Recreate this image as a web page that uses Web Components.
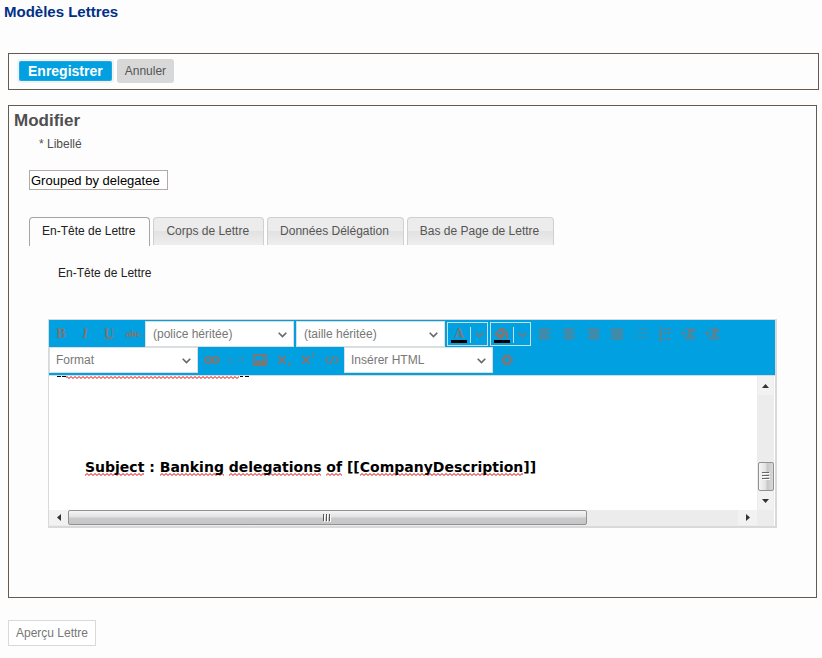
<!DOCTYPE html>
<html lang="fr">
<head>
<meta charset="utf-8">
<title>Modèles Lettres</title>
<style>
  body { margin: 0; background: #fdfdfd; color: #4f4f4f; font: 12px/16px "Liberation Sans", Arial, sans-serif; }
</style>
</head>
<body>
<letter-page></letter-page>
<script>
const define = (name, html) => {
  const template = document.createElement('template');
  template.innerHTML = html;
  customElements.define(name, class extends HTMLElement {
    constructor() {
      super();
      this.attachShadow({ mode: 'open' }).append(template.content.cloneNode(true));
    }
    connectedCallback() {
      const root = this.shadowRoot;
      const label = this.getAttribute('label');
      if (name === 'tool-button') {
        root.querySelector('button').setAttribute('aria-label', label);
      } else if (name === 'tool-select') {
        root.querySelector('option').textContent = label;
        root.querySelector('select').setAttribute('aria-label', this.getAttribute('hint'));
      } else if (name === 'color-button') {
        root.querySelector('.apply').setAttribute('aria-label', label);
        root.querySelector('.more').setAttribute('aria-label', label + ' : options');
      } else if (name === 'tab-item') {
        root.querySelector('button').setAttribute('aria-selected', this.hasAttribute('active'));
      }
    }
  });
};

define('panel-box', `
<style>
  :host { display: block; box-sizing: border-box; border: 1px solid #665a50; }
</style>
<slot></slot>`);

define('action-button', `
<style>
  :host { display: block; }
  button { display: block; box-sizing: border-box; height: 24px; padding: 0 8px; border: 0; border-radius: 3px;
    background: #d8d8d8; color: #555; font: 12px/24px "Liberation Sans", Arial, sans-serif; }
  :host([primary]) button { padding: 0 9px; border: 2px solid #eef3f6; border-radius: 4px; background: #00a0e1; color: #fff;
    box-shadow: inset 0 0 0 1px #24a6dd; font-size: 14px; font-weight: bold; line-height: 18px; }
  :host([outline]) button { height: 26px; padding: 0 7px; border: 1px solid #d9d9d9; border-radius: 0; background: #fff; color: #777; }
</style>
<button type="button"><slot></slot></button>`);

define('tab-item', `
<style>
  :host { display: block; }
  button { display: block; box-sizing: border-box; height: 28px; padding: 0 14px 1px 12px; border: 1px solid #d0d0d0; border-bottom: 0;
    border-radius: 4px 4px 0 0; background: linear-gradient(#ececec 0 50%, #e2e2e2 50%, #eee); color: #555;
    font: 12px/26px "Liberation Sans", Arial, sans-serif; white-space: nowrap; }
  :host([active]) button { height: 29px; padding-bottom: 2px; border-color: #a5a5a5; background: #fdfdfd; color: #212121; }
</style>
<button type="button" role="tab"><slot></slot></button>`);

define('tool-button', `
<style>
  :host { display: block; }
  button { display: flex; align-items: center; justify-content: center; width: 24px; height: 25px; padding: 0; border: 0;
    background: none; color: #7d7674; font: bold 14px/16px "Liberation Serif", "Times New Roman", serif; }
  ::slotted(svg) { display: block; width: 16px; height: 16px; fill: none; stroke: currentColor; }
</style>
<button type="button"><slot></slot></button>`);

define('tool-select', `
<style>
  :host { display: grid; width: 149px; height: 26px; }
  select, svg { grid-area: 1 / 1; }
  select { appearance: none; box-sizing: border-box; width: 100%; height: 26px; margin: 0; padding: 0 28px 0 7px; border: 1px solid #d9dee0;
    border-radius: 0; background: #fff; color: #777; font: 12px/24px "Liberation Sans", Arial, sans-serif; }
  :host([tight]) select { padding-left: 6px; }
  svg { justify-self: end; align-self: center; margin: 2px 7px 0 0; pointer-events: none; }
</style>
<select><option></option></select>
<svg width="9" height="6" viewBox="0 0 9 6" fill="none" stroke="#666" stroke-width="1.6"><path d="M.7.8 4.5 4.6 8.3.8"/></svg>`);

define('color-button', `
<style>
  :host { display: flex; box-sizing: border-box; width: 41px; height: 24px; border: 1px solid #c9dfe8; color: #7d7674; }
  button { display: flex; flex-direction: column; align-items: center; padding: 0; border: 0; background: none; color: inherit; }
  .apply { width: 22px; padding-top: 5px; font: bold 14px/12px "Liberation Serif", "Times New Roman", serif; }
  .glyph { display: block; height: 12px; }
  .swatch { width: 16px; height: 3px; background: #000; }
  .more { justify-content: center; width: 17px; height: 16px; margin-top: 4px; border-left: 1px solid #c9dfe8; }
</style>
<button type="button" class="apply"><span class="glyph"><slot></slot></span><span class="swatch"></span></button>
<button type="button" class="more"><svg width="9" height="6" viewBox="0 0 9 6" fill="none" stroke="currentColor" stroke-width="1.7"><path d="M.7.8 4.5 4.6 8.3.8"/></svg></button>`);

define('edit-area', `
<style>
  :host { display: grid; grid-template: 134px 16px / 1fr 17px; padding-right: 1px; background: #fff; }
  .text { overflow: hidden; color: #000; }
  .clipped { display: block; margin-left: 8px; }
  p { margin: 78px 0 0 36px; font: bold 14px/20px "DejaVu Sans", Verdana, sans-serif; white-space: nowrap; }
  u { text-decoration: none; padding-bottom: 1px;
    background: url("data:image/svg+xml,%3Csvg xmlns='http://www.w3.org/2000/svg' width='4' height='3'%3E%3Cpath d='M-1 1.5 0 2.5 2 .5 4 2.5 5 1.5' fill='none' stroke='%23e00000'/%3E%3C/svg%3E") 0 100% repeat-x; }
  .vertical, .horizontal { display: flex; background: #ececec; }
  .vertical { flex-direction: column; align-items: center; padding: 0 1px; }
  .vertical .track { flex: 1; }
  .vertical .thumb { width: 14px; height: 27px; border: 1px solid #929292; border-radius: 2px;
    background: linear-gradient(90deg, #f6f6f6, #e3e3e3 45%, #c8c8ca 60%, #d8d8da); }
  .horizontal .thumb { flex: 519; height: 13px; border: 1px solid #929292; border-radius: 2px;
    background: linear-gradient(#f5f5f5, #e2e2e2 45%, #cacacc 55%, #c6c6c8); }
  .horizontal .track { flex: 152; }
  .thumb { display: flex; align-items: center; justify-content: center; }
  .arrow { display: flex; align-items: center; justify-content: center; width: 19px; height: 15px; }
  .vertical .arrow { width: 15px; height: 19px; background: #f2f2f2; }
  .horizontal .arrow { background: #f2f2f2; }
  .corner { background: #ececec; }
</style>
<div class="text">
  <svg class="clipped" width="194" height="3" viewBox="0 0 194 3" aria-hidden="true">
    <defs><pattern id="wave" width="4" height="3" patternUnits="userSpaceOnUse"><path d="M-1 1.5 0 2.5 2 .5 4 2.5 5 1.5" fill="none" stroke="#e00000"/></pattern></defs>
    <path d="M0 .5h4M5 .5h4M183 .5h3M188 .5h4" stroke="#000"/><path fill="url(#wave)" d="M9 0h173v3H9z"/>
  </svg>
  <p><u>Subject</u> : <u>Banking</u> <u>delegations</u> <u>of</u> [[<u>CompanyDescription</u>]]</p>
</div>
<div class="vertical">
  <span class="arrow"><svg width="7" height="4"><path d="M0 4 3.5 0 7 4z" fill="#333"/></svg></span>
  <span class="track"></span>
  <span class="thumb"><svg width="8" height="9" stroke="#666"><path d="M0 .5h7M0 3.5h7M0 6.5h7"/><path stroke="#fff" d="M1 1.5h7M1 4.5h7M1 7.5h7"/></svg></span>
  <span class="arrow"><svg width="7" height="4"><path d="M0 0 3.5 4 7 0z" fill="#333"/></svg></span>
</div>
<div class="horizontal">
  <span class="arrow"><svg width="4" height="7"><path d="M4 0 0 3.5 4 7z" fill="#333"/></svg></span>
  <span class="thumb"><svg width="9" height="8" stroke="#555"><path d="M.5 0v7M3.5 0v7M6.5 0v7"/><path stroke="#fff" d="M1.5 1v7M4.5 1v7M7.5 1v7"/></svg></span>
  <span class="track"></span>
  <span class="arrow"><svg width="4" height="7"><path d="M0 0 4 3.5 0 7z" fill="#333"/></svg></span>
</div>
<div class="corner"></div>`);

define('letter-editor', `
<style>
  :host { display: block; border: 1px solid #d9d9d9; border-width: 1px 2px 2px 1px; }
  .toolbar { padding: 1px 0 2px; border-bottom: 1px solid #d3dde1; background: #00a0e1; }
  .row { display: flex; align-items: center; }
  .group { display: flex; }
  .row > tool-select, .row > color-button { margin-right: 2px; }
  i { font-weight: bold; }
  s { font-size: 10px; }
</style>
<div class="toolbar" role="toolbar" aria-label="Mise en forme">
  <div class="row">
    <div class="group">
      <tool-button label="Gras">B</tool-button>
      <tool-button label="Italique"><i>I</i></tool-button>
      <tool-button label="Souligné"><u>U</u></tool-button>
      <tool-button label="Barré"><s>abc</s></tool-button>
    </div>
    <tool-select label="(police héritée)" hint="Police"></tool-select>
    <tool-select label="(taille héritée)" hint="Taille"></tool-select>
    <color-button label="Couleur du texte">A</color-button>
    <color-button label="Couleur de fond"><svg width="16" height="12" viewBox="0 0 16 12" fill="none" stroke="currentColor"><path d="M6 1.5 11 6 6.5 10.5 1.5 6.5z" stroke-width="2"/><path d="M3 6.5h7L6.5 10z" fill="currentColor"/><path d="M5 1.5C8-.5 13 1 13.5 9" stroke-width="2"/><path d="M13 6v5" stroke-width="2"/></svg></color-button>
    <div class="group">
      <tool-button label="Aligner à gauche"><svg viewBox="0 0 16 16"><path d="M2 2.5h12M2 4.5h9M2 6.5h12M2 8.5h9M2 10.5h12M2 12.5h9"/></svg></tool-button>
      <tool-button label="Centrer"><svg viewBox="0 0 16 16"><path d="M2 2.5h12M4 4.5h8M2 6.5h12M4 8.5h8M2 10.5h12M4 12.5h8"/></svg></tool-button>
      <tool-button label="Aligner à droite"><svg viewBox="0 0 16 16"><path d="M2 2.5h12M5 4.5h9M2 6.5h12M5 8.5h9M2 10.5h12M5 12.5h9"/></svg></tool-button>
      <tool-button label="Justifier"><svg viewBox="0 0 16 16"><path d="M2 2.5h12M2 4.5h12M2 6.5h12M2 8.5h12M2 10.5h12M2 12.5h12"/></svg></tool-button>
      <tool-button label="Liste à puces"><svg viewBox="0 0 16 16" opacity=".6"><path d="M6 3.5h9M6 7.5h9M6 11.5h9M2 3.5h2M2 7.5h2M2 11.5h2"/></svg></tool-button>
      <tool-button label="Liste numérotée"><svg viewBox="0 0 16 16"><path d="M6 2.5h8M6 7.5h8M6 12.5h8M2 1.5h1.5v3M2 4.5h3M2 6.5h2.5v1L2 9.5h3M2 11.5h2.5v3H2M2.5 13h2"/></svg></tool-button>
      <tool-button label="Augmenter le retrait"><svg viewBox="0 0 16 16"><path d="M4 2.5h10M4 12.5h10M4 10.5h10M0 7.5h4M2 5l2.5 2.5L2 10"/><path stroke-width="2" d="M7 5.5h7M7 8.5h4"/></svg></tool-button>
      <tool-button label="Diminuer le retrait"><svg viewBox="0 0 16 16"><path d="M4 2.5h10M4 12.5h10M4 10.5h10M0 7.5h5M3 5 .5 7.5 3 10"/><path stroke-width="2" d="M7 5.5h7M7 8.5h4"/></svg></tool-button>
    </div>
  </div>
  <div class="row">
    <tool-select label="Format" hint="Format" tight></tool-select>
    <div class="group">
      <tool-button label="Insérer un lien"><svg viewBox="0 0 16 16" stroke-width="2"><path d="M6 11H4C.2 11 .2 5.5 4 5.5h3.5C10 5.5 10.5 9 8.5 9.5M10 5h2c3.8 0 3.8 5.5 0 5.5H8.500C6 10.5 5.5 7.5 7.5 7"/></svg></tool-button>
      <tool-button label="Supprimer le lien"><svg viewBox="0 0 16 16" opacity=".35" stroke-width="1.5"><path d="M6 11.5H4c-4 0-4-5 0-5h2M10 5h2c4 0 4 5 0 5h-2"/></svg></tool-button>
      <tool-button label="Insérer une image"><svg viewBox="0 0 16 16"><path stroke-width="2" d="M2 3h12v10H2z"/><path fill="currentColor" d="m3 12 3-4 2 2 3-2 3 4z"/><circle cx="11" cy="5.5" r=".8" fill="currentColor"/></svg></tool-button>
      <tool-button label="Indice"><svg viewBox="0 0 16 16"><path stroke-width="2" d="m2.5 4 7 7.5m0-7.5-7 7.5"/><path d="M12 10.5h2v1l-2 2h2.5"/></svg></tool-button>
      <tool-button label="Exposant"><svg viewBox="0 0 16 16"><path stroke-width="2" d="m2.5 4 7 7.5m0-7.5-7 7.5"/><path d="M12 1.5h2v1l-2 2h2.5"/></svg></tool-button>
      <tool-button label="Voir le HTML"><svg viewBox="0 0 16 16" stroke-width="1.5"><path d="M5 4.5 1.5 8 5 11.5M11 4.5 14.5 8 11 11.5M9.5 4l-3 8"/></svg></tool-button>
    </div>
    <tool-select label="Insérer HTML" hint="Insérer HTML" tight></tool-select>
    <tool-button label="Paramètres"><svg viewBox="0 0 16 16"><circle cx="8" cy="8" r="3.5" stroke-width="2.2"/><circle cx="8" cy="8" r="5" stroke-width="2" stroke-dasharray="1.96 1.967"/></svg></tool-button>
  </div>
</div>
<edit-area></edit-area>`);

define('letter-page', `
<style>
  :host { display: block; padding: 3px 3px 12px 4px; }
  h1 { margin: 0; color: #003087; font-size: 15px; line-height: 18px; }
  h2 { margin: 0; color: #4f4f4f; font-size: 17px; line-height: 20px; }
  .actions { display: flex; gap: 3px; margin: 32px 0 15px 4px; padding: 5px 8px 6px; }
  .form { margin: 0 2px 22px 4px; padding: 5px 5px 69px; }
  label { display: block; margin: 5px 0 18px 25px; }
  input { display: block; box-sizing: border-box; width: 139px; height: 20px; margin: 0 0 27px 15px; padding: 0 1px; border: 1px solid #b3aaa8;
    border-radius: 0; background: #fff; color: #000; font: 13px/18px "Liberation Sans", Arial, sans-serif; }
  .tabs { display: flex; align-items: flex-start; gap: 3px; height: 29px; margin-left: 15px; }
  .caption { margin: 19px 0 38px 44px; color: #212121; }
  letter-editor { margin: 0 34px; }
  action-button[outline] { width: max-content; margin-left: 4px; }
</style>
<h1>Modèles Lettres</h1>
<panel-box class="actions">
  <action-button primary>Enregistrer</action-button>
  <action-button>Annuler</action-button>
</panel-box>
<panel-box class="form">
  <h2>Modifier</h2>
  <label for="libelle">* Libellé</label>
  <input id="libelle" type="text" value="Grouped by delegatee">
  <div class="tabs" role="tablist">
    <tab-item active>En-Tête de Lettre</tab-item>
    <tab-item>Corps de Lettre</tab-item>
    <tab-item>Données Délégation</tab-item>
    <tab-item>Bas de Page de Lettre</tab-item>
  </div>
  <div class="caption">En-Tête de Lettre</div>
  <letter-editor></letter-editor>
</panel-box>
<action-button outline>Aperçu Lettre</action-button>`);
</script>
</body>
</html>
